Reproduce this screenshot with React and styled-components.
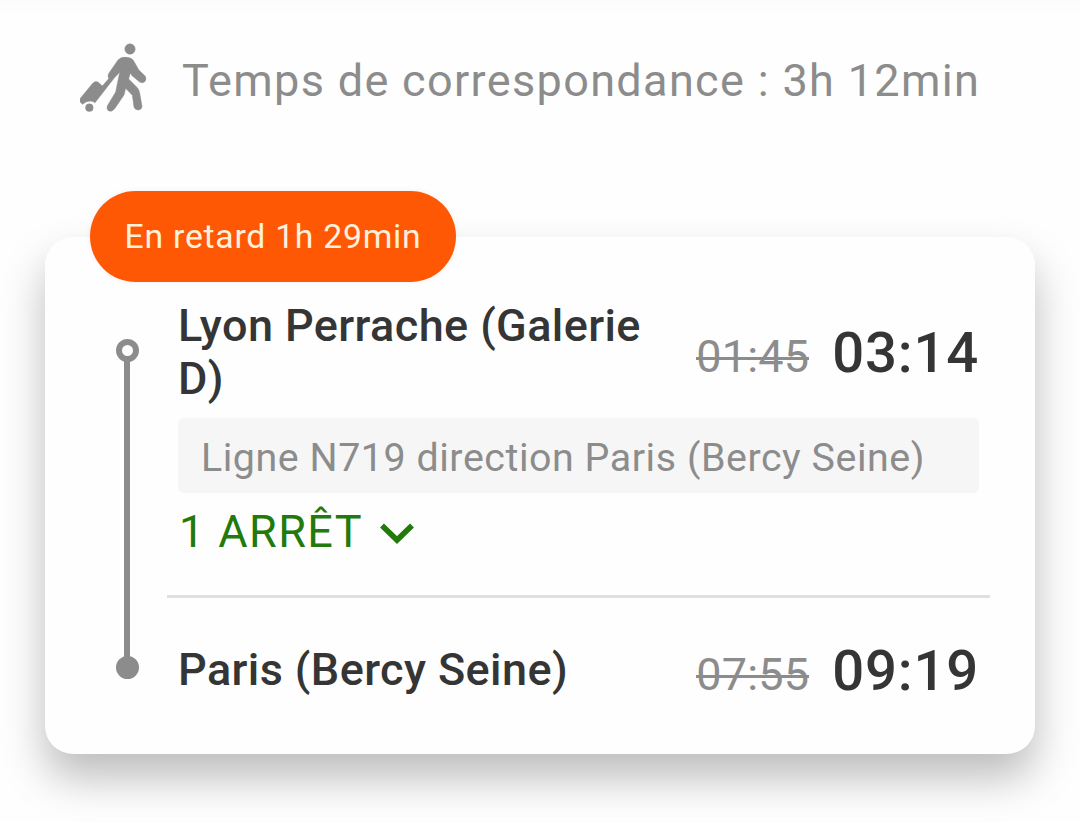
import React from 'react';
import styled, { createGlobalStyle } from 'styled-components';

const GlobalStyle = createGlobalStyle`
  * {
    box-sizing: border-box;
  }
  body {
    margin: 0;
    background: #fefefe;
    font-family: Roboto, 'Liberation Sans', sans-serif;
  }
`;

const Page = styled.div`
  width: 1080px;
  height: 822px;
  overflow: hidden;
  background: linear-gradient(#fbfbfb, #fefefe 14px);
`;

const Transfer = styled.div`
  display: flex;
  align-items: center;
  gap: 35px;
  height: 237px;
  padding: 43px 0 125px 80px;
`;

const WalkerIcon = styled.svg`
  width: 67px;
  height: 69px;
  fill: #8c8c8c;
  stroke: #8c8c8c;
  stroke-width: 1.5;
`;

const TransferText = styled.div`
  font-size: 45px;
  line-height: 53px;
  letter-spacing: 1.34px;
  color: #8c8c8c;
  white-space: nowrap;
  padding-top: 6px;
`;

const Card = styled.div`
  position: relative;
  display: flex;
  gap: 28px;
  width: 990px;
  height: 517px;
  margin: 0 45px;
  padding: 62px 45px 0 71px;
  border-radius: 28px;
  background: #fefefe;
  box-shadow: 0 24px 43px rgba(0, 0, 0, 0.26);
`;

const DelayBadge = styled.div`
  position: absolute;
  top: -46px;
  left: 45px;
  display: flex;
  align-items: center;
  justify-content: center;
  width: 366px;
  height: 91px;
  border-radius: 46px;
  background: #ff5805;
  color: #fff0dc;
  font-size: 33.75px;
  letter-spacing: 0.74px;
  white-space: nowrap;
  box-shadow: 0 0 6px rgba(0, 0, 0, 0.06);
`;

const Rail = styled.div`
  display: flex;
  flex-direction: column;
  align-items: center;
  width: 23px;
  height: 340px;
  margin-top: 40px;
`;

const Dot = styled.div`
  width: 23px;
  height: 23px;
  border-radius: 50%;
  border: 6px solid #8c8c8c;
  background: ${props => (props.$filled ? '#8c8c8c' : '#fefefe')};
`;

const RailLine = styled.div`
  flex: 1;
  width: 6px;
  margin: -1px 1px -1px 0;
  background: #8c8c8c;
`;

const Body = styled.div`
  display: flex;
  flex-direction: column;
  width: 823px;
`;

const StopRow = styled.div`
  display: flex;
  align-items: center;
  justify-content: space-between;
  height: ${props => props.$height}px;
  padding: 0 11px;
`;

const Station = styled.div`
  width: 480px;
  font-size: 45px;
  font-weight: 500;
  line-height: 53px;
  letter-spacing: 0.4px;
  color: #353535;
`;

const Times = styled.div`
  display: flex;
  align-items: baseline;
  gap: 23px;
  padding-top: ${props => (props.$arrival ? 4 : 2)}px;
`;

const OldTime = styled.span`
  position: relative;
  font-size: 45px;
  line-height: 53px;
  letter-spacing: 0.2px;
  color: #8c8c8c;

  &::after {
    content: '';
    position: absolute;
    left: 0;
    right: 0;
    top: 27px;
    height: 3px;
    background: #8c8c8c;
  }
`;

const NewTime = styled.span`
  font-size: 56.25px;
  font-weight: 500;
  line-height: 66px;
  letter-spacing: 0.8px;
  color: #353535;
`;

const LineInfo = styled.div`
  height: 75px;
  margin: 13px 11px 0;
  padding-left: 23px;
  border-radius: 6px;
  background: #f6f6f6;
  color: #8c8c8c;
  font-size: 39.375px;
  line-height: 80px;
  letter-spacing: 0.55px;
  white-space: nowrap;
`;

const StopsToggle = styled.div`
  display: flex;
  align-items: center;
  gap: 17px;
  height: 53px;
  margin: 12px 11px 37px;
  padding-left: 1px;
  color: #217a0b;
  font-size: 45px;
  line-height: 55px;
  letter-spacing: 1.4px;
`;

const Chevron = styled.svg`
  width: 34px;
  height: 21px;
  margin-top: 4px;
  fill: none;
  stroke: #217a0b;
  stroke-width: 5.6;
`;

const Divider = styled.div`
  height: 3px;
  margin-bottom: 38px;
  background: #e0e0e0;
`;

function StopTimes({ planned, actual, arrival }) {
  return (
    <Times $arrival={arrival}>
      <OldTime>{planned}</OldTime>
      <NewTime>{actual}</NewTime>
    </Times>
  );
}

function App() {
  return (
    <Page>
      <GlobalStyle />
      <Transfer>
        <WalkerIcon viewBox="60 40 201 207">
          <circle cx="210" cy="58" r="15.5" />
          <circle cx="88" cy="234" r="11.5" />
          <path d="M60 207 L97 162 Q106 152 115 158 L127 169 L146 147 Q142 137 147 130 L174 91 Q184 80 200 83 Q217 84 223 97 L236 120 L256 140 Q261 151 253 157 Q247 161 239 157 L216 138 L211 130 L206 148 L232 174 Q238 181 239 190 L246 230 Q246 240 235 241 Q225 241 222 232 L217 197 L197 176 L192 196 L164 237 Q154 249 145 243 Q138 236 143 227 L167 187 L179 128 L162 146 L105 219 Q100 214 90 214 Q76 215 68 224 Q57 218 60 207 Z" />
        </WalkerIcon>
        <TransferText>Temps de correspondance : 3h 12min</TransferText>
      </Transfer>
      <Card>
        <DelayBadge>En retard 1h 29min</DelayBadge>
        <Rail>
          <Dot />
          <RailLine />
          <Dot $filled />
        </Rail>
        <Body>
          <StopRow $height={106}>
            <Station>Lyon Perrache (Galerie D)</Station>
            <StopTimes planned="01:45" actual="03:14" />
          </StopRow>
          <LineInfo>Ligne N719 direction Paris (Bercy Seine)</LineInfo>
          <StopsToggle>
            1 ARRÊT
            <Chevron viewBox="0 0 34 21">
              <path d="M2 2.5 L17 17 L32 2.5" />
            </Chevron>
          </StopsToggle>
          <Divider />
          <StopRow $height={66}>
            <Station>Paris (Bercy Seine)</Station>
            <StopTimes planned="07:55" actual="09:19" arrival />
          </StopRow>
        </Body>
      </Card>
    </Page>
  );
}

export default App;
